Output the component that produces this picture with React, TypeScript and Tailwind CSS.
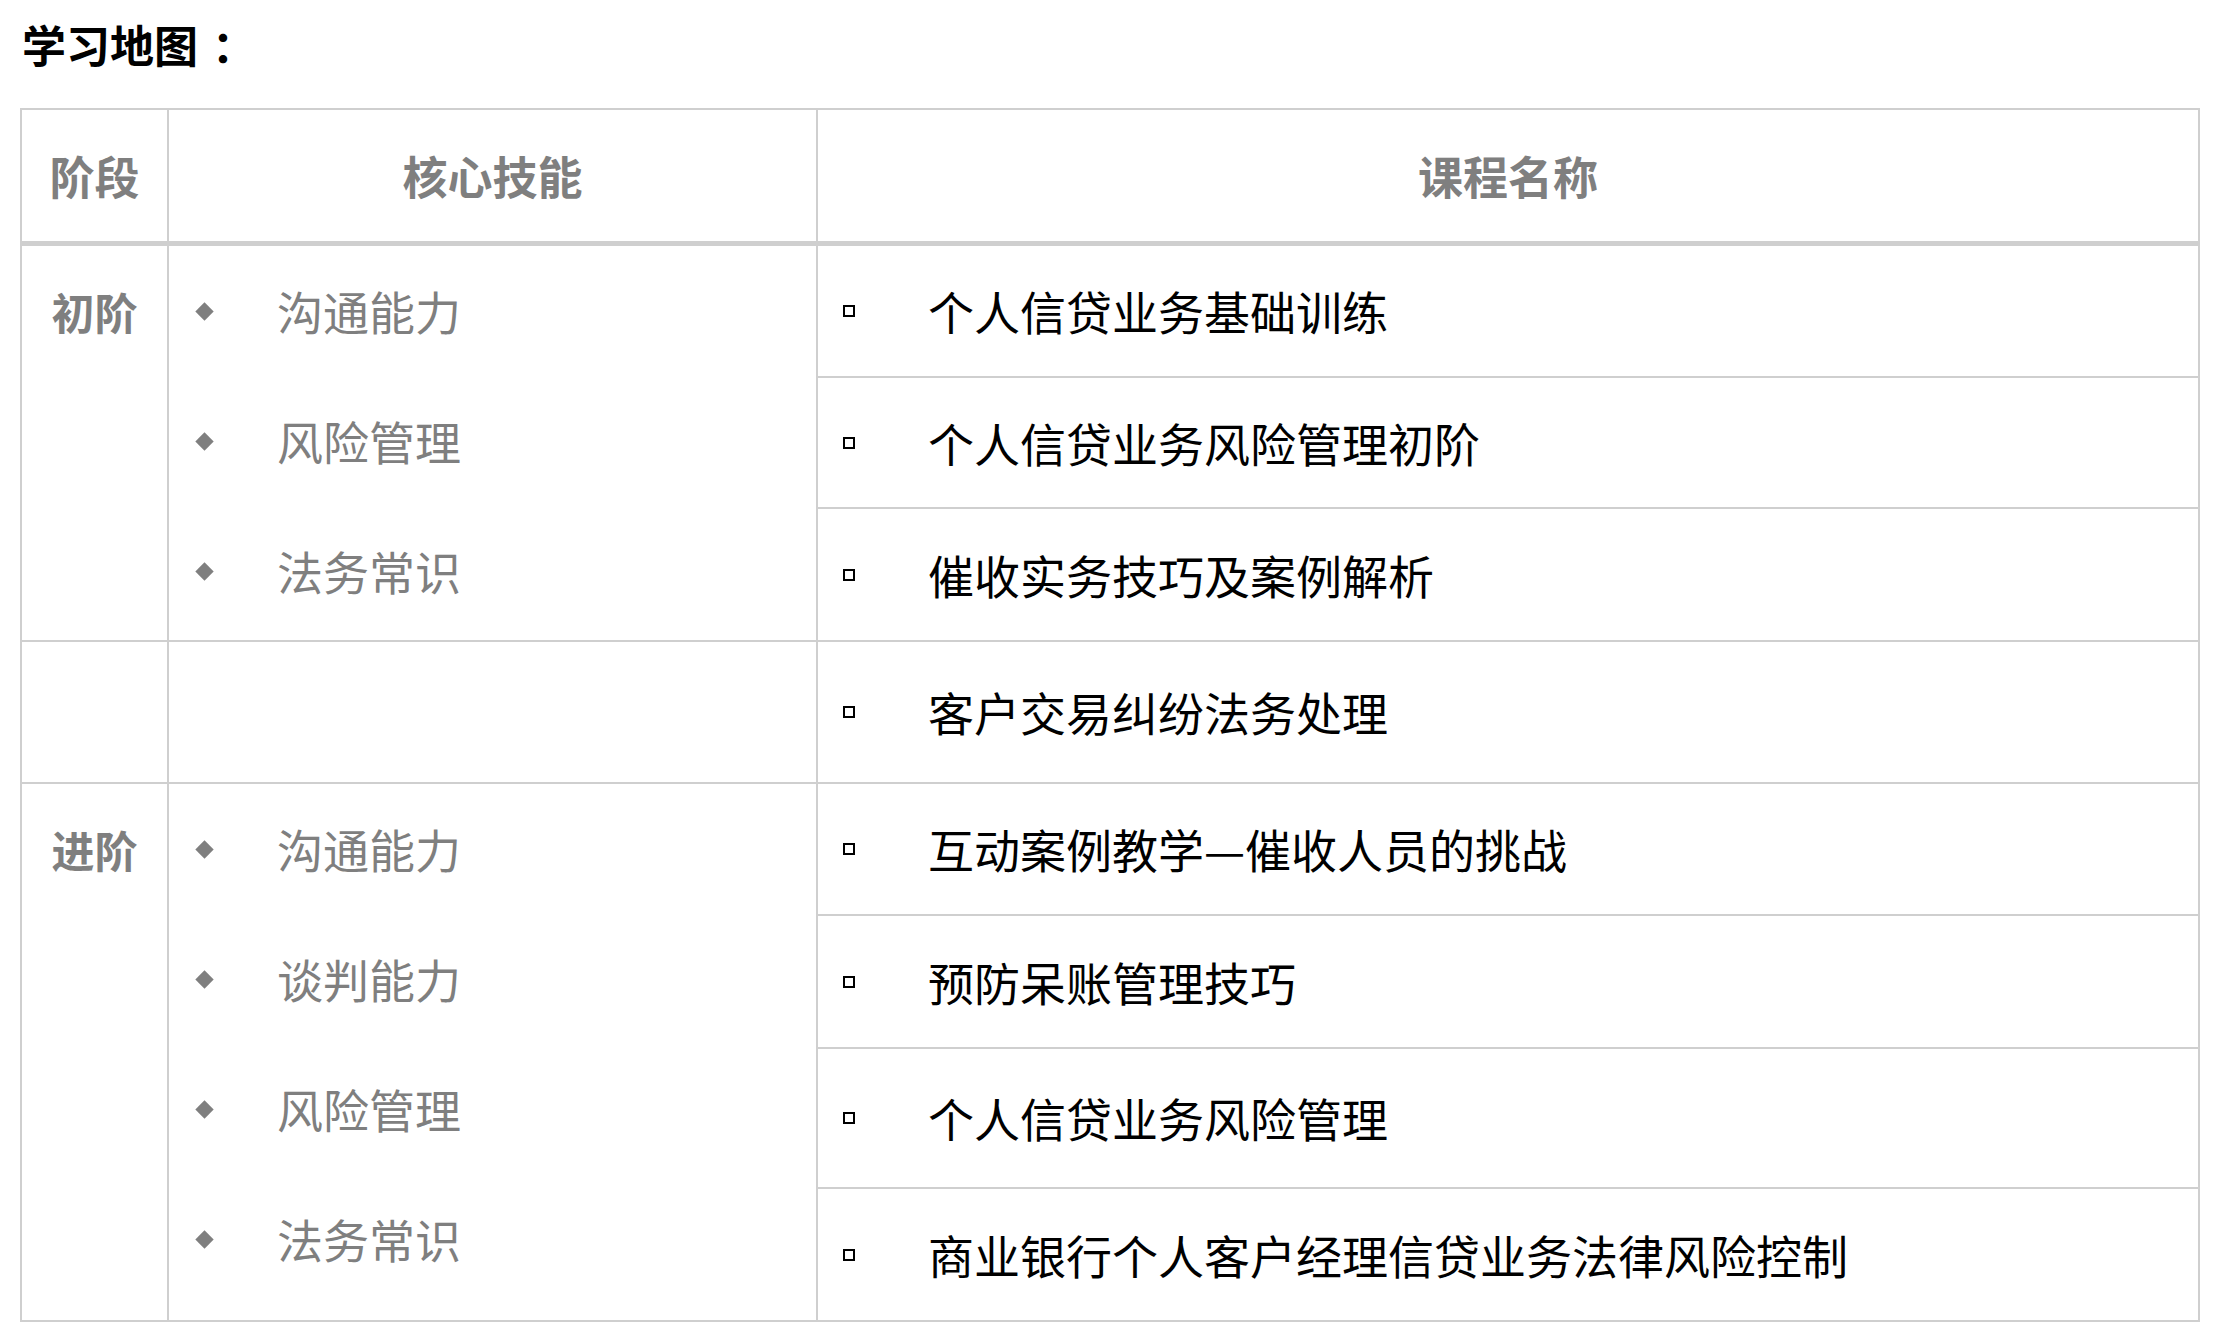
import React from "react";

const FONT = { fontFamily: '"Noto Sans CJK SC", "Noto Sans", sans-serif' };

const courses = [
  { t: "个人信贷业务基础训练", h: "h-[132px]" },
  { t: "个人信贷业务风险管理初阶", h: "h-[131px]" },
  { t: "催收实务技巧及案例解析", h: "h-[133px]" },
  { t: "客户交易纠纷法务处理", h: "h-[142px]" },
  { t: "互动案例教学—催收人员的挑战", h: "h-[132px]" },
  { t: "预防呆账管理技巧", h: "h-[133px]" },
  { t: "个人信贷业务风险管理", h: "h-[140px]" },
  { t: "商业银行个人客户经理信贷业务法律风险控制", h: "h-[133px]" },
];

function Skill({ t }: { t: string }) {
  return (
    <div className="flex items-center h-[130px]">
      <div className="w-[26px] shrink-0" />
      <div className="w-[18px] h-[18px] flex items-center justify-center shrink-0">
        <div className="w-[13px] h-[13px] bg-[#7f7f7f] rotate-45" />
      </div>
      <div className="w-[64px] shrink-0" />
      <span className="text-[46px] leading-none text-[#7f7f7f] -mt-[3px]">{t}</span>
    </div>
  );
}

function Course({ t, h }: { t: string; h: string }) {
  return (
    <div className={`${h} border-r-2 border-b-2 border-[#cfcfcf] flex items-center`}>
      <div className="w-[25px] shrink-0" />
      <div className="w-[12px] h-[12px] border-2 border-black shrink-0" />
      <div className="w-[73px] shrink-0" />
      <span className="text-[46px] leading-none text-black whitespace-nowrap -mt-[2px]">{t}</span>
    </div>
  );
}

export default function App() {
  return (
    <div className="w-[2220px] h-[1340px] bg-white pl-[20px]" style={FONT}>
      <div className="h-[108px] flex items-start">
        <div className="text-[44px] font-bold text-black leading-[88px] pl-[2px] flex">
          <span>学习地图</span>
          <span className="ml-[14px]">：</span>
        </div>
      </div>
      <div className="w-[2180px] border-l-2 border-t-2 border-[#cfcfcf] flex flex-col">
        {/* header */}
        <div className="flex h-[136px] border-b-[5px] border-[#cfcfcf]">
          <div className="w-[147px] border-r-2 border-[#cfcfcf] flex items-center justify-center text-[45px] font-bold text-[#7f7f7f]">
            阶段
          </div>
          <div className="w-[649px] border-r-2 border-[#cfcfcf] flex items-center justify-center text-[45px] font-bold text-[#7f7f7f]">
            核心技能
          </div>
          <div className="w-[1382px] border-r-2 border-[#cfcfcf] flex items-center justify-center text-[45px] font-bold text-[#7f7f7f]">
            课程名称
          </div>
        </div>
        {/* group 1 */}
        <div className="flex">
          <div className="w-[147px] border-r-2 border-b-2 border-[#cfcfcf]">
            <div className="h-[130px] flex items-center justify-center text-[43px] font-bold text-[#7f7f7f] leading-none">初阶</div>
          </div>
          <div className="w-[649px] border-r-2 border-b-2 border-[#cfcfcf]">
            <Skill t="沟通能力" />
            <Skill t="风险管理" />
            <Skill t="法务常识" />
          </div>
          <div className="w-[1382px] flex flex-col">
            {courses.slice(0, 3).map((c) => (
              <Course key={c.t} t={c.t} h={c.h} />
            ))}
          </div>
        </div>
        {/* row 4 */}
        <div className="flex">
          <div className="w-[147px] border-r-2 border-b-2 border-[#cfcfcf]" />
          <div className="w-[649px] border-r-2 border-b-2 border-[#cfcfcf]" />
          <div className="w-[1382px] flex flex-col">
            <Course t={courses[3].t} h={courses[3].h} />
          </div>
        </div>
        {/* group 2 */}
        <div className="flex">
          <div className="w-[147px] border-r-2 border-b-2 border-[#cfcfcf]">
            <div className="h-[130px] flex items-center justify-center text-[43px] font-bold text-[#7f7f7f] leading-none">进阶</div>
          </div>
          <div className="w-[649px] border-r-2 border-b-2 border-[#cfcfcf]">
            <Skill t="沟通能力" />
            <Skill t="谈判能力" />
            <Skill t="风险管理" />
            <Skill t="法务常识" />
          </div>
          <div className="w-[1382px] flex flex-col">
            {courses.slice(4).map((c) => (
              <Course key={c.t} t={c.t} h={c.h} />
            ))}
          </div>
        </div>
      </div>
    </div>
  );
}
